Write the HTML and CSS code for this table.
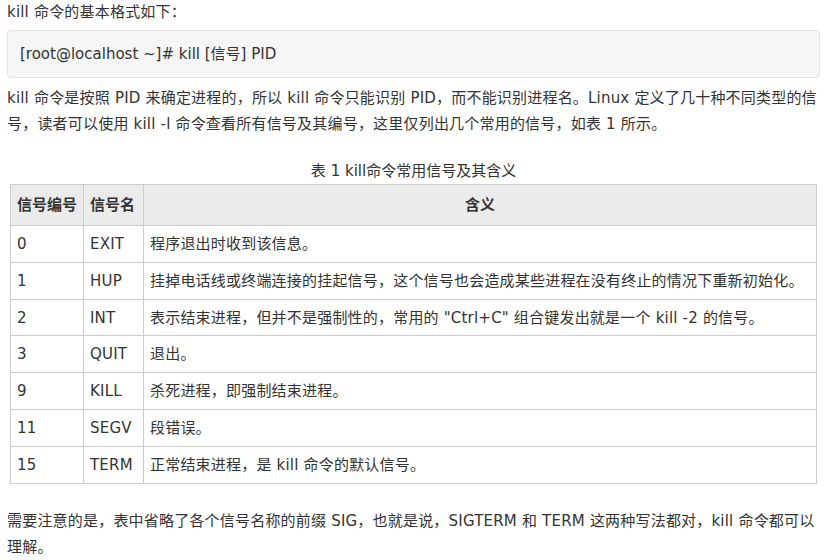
FILE: index.html
```html
<!DOCTYPE html>
<html lang="zh-CN">
<head>
<meta charset="utf-8">
<title>kill 命令</title>
<link rel="stylesheet" href="styles.css">
</head>
<body>
<div class="article">
  <p class="p-first">kill 命令的基本格式如下：</p>
  <div class="code">[root@localhost ~]# kill [信号] PID</div>
  <p class="p-mid">kill 命令是按照 PID 来确定进程的，所以 kill 命令只能识别 PID，而不能识别进程名。Linux 定义了几十种不同类型的信号，读者可以使用 kill -l 命令查看所有信号及其编号，这里仅列出几个常用的信号，如表 1 所示。</p>
  <div class="caption">表 1 kill命令常用信号及其含义</div>
  <table class="sig">
    <colgroup>
      <col class="c1"><col class="c2"><col class="c3">
    </colgroup>
    <thead>
      <tr><th class="left">信号编号</th><th class="left">信号名</th><th>含义</th></tr>
    </thead>
    <tbody>
      <tr><td>0</td><td>EXIT</td><td>程序退出时收到该信息。</td></tr>
      <tr><td>1</td><td>HUP</td><td>挂掉电话线或终端连接的挂起信号，这个信号也会造成某些进程在没有终止的情况下重新初始化。</td></tr>
      <tr><td>2</td><td>INT</td><td>表示结束进程，但并不是强制性的，常用的 "Ctrl+C" 组合键发出就是一个 kill -2 的信号。</td></tr>
      <tr><td>3</td><td>QUIT</td><td>退出。</td></tr>
      <tr><td>9</td><td>KILL</td><td>杀死进程，即强制结束进程。</td></tr>
      <tr><td>11</td><td>SEGV</td><td>段错误。</td></tr>
      <tr><td>15</td><td>TERM</td><td>正常结束进程，是 kill 命令的默认信号。</td></tr>
    </tbody>
  </table>
  <p class="p-last">需要注意的是，表中省略了各个信号名称的前缀 SIG，也就是说，SIGTERM 和 TERM 这两种写法都对，kill 命令都可以理解。</p>
</div>
</body>
</html>
```

FILE: styles.css
```css
html, body {
  margin: 0;
  padding: 0;
  background: #ffffff;
}
body {
  font-family: "DejaVu Sans", "Noto Sans CJK SC", sans-serif;
  font-size: 15px;
  line-height: 26px;
  letter-spacing: 0.2px;
  color: #333333;
}
.article {
  padding: 0 17px 0 7px;
}
p {
  margin: 0;
}
.p-first {
  margin-top: -1px;
  margin-bottom: 5px;
}
.code {
  background: #f6f6f6;
  border: 1px solid #e3e3e3;
  border-radius: 4px;
  padding: 10px 12px;
  line-height: 26px;
  letter-spacing: 0;
}
.p-mid {
  margin-top: 7px;
}
.caption {
  margin-top: 21px;
  text-align: center;
  letter-spacing: 0;
}
.sig {
  border-collapse: collapse;
  width: 807px;
  margin-left: 3px;
  table-layout: fixed;
}
.c1 { width: 73px; }
.c2 { width: 60px; }
.sig th, .sig td {
  border: 1px solid #cccccc;
  padding: 0 6px;
  text-align: left;
  vertical-align: middle;
}
.sig th {
  background: #ebebeb;
  font-weight: bold;
  height: 40px;
  text-align: center;
  letter-spacing: 0;
}
.sig th.left {
  text-align: left;
}
.sig td {
  height: 35.83px;
  white-space: nowrap;
}
.p-last {
  margin-top: 24px;
}
```
